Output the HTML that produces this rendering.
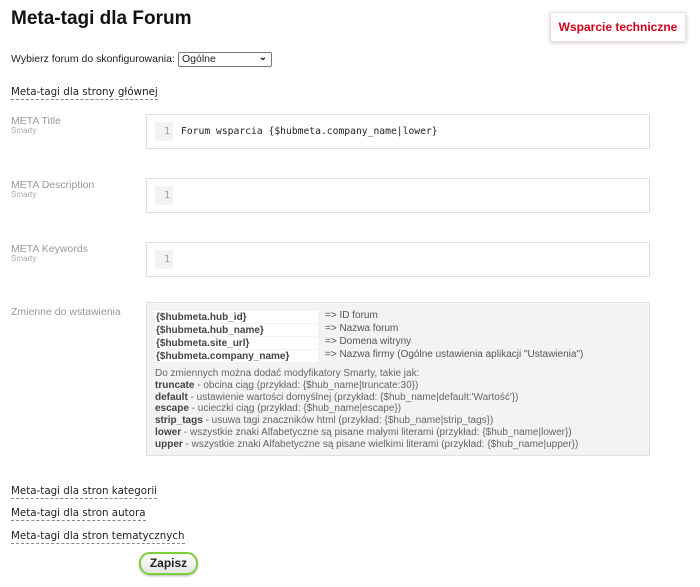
<!DOCTYPE html>
<html><head><meta charset="utf-8"><style>
*{margin:0;padding:0;box-sizing:border-box}
body{width:700px;height:587px;background:#fff;font-family:"Liberation Sans",Arial,sans-serif;position:relative;overflow:hidden;color:#222}
.a{position:absolute;white-space:nowrap}
h1{position:absolute;left:11px;top:8px;font-size:19px;font-weight:bold;color:#111}
.sup{left:550px;top:12px;width:136px;height:30px;border:1px solid #f2dede;box-shadow:0 1px 4px rgba(0,0,0,.2);color:#d0021b;font-weight:bold;font-size:12px;line-height:28px;text-align:center}
.lbl{font-size:10.5px;color:#222}
.sel{left:178px;top:52px;width:94px;height:15px;border:1px solid #777;border-radius:2px;font-size:10.5px;line-height:13px;padding-left:3px;background:#fff}
.h{font-family:"DejaVu Sans",sans-serif;font-size:10.3px;color:#222;border-bottom:1px dashed #888;padding-bottom:1px}
.fl{font-size:10.5px;color:#999;left:11px}
.sm{font-size:8px;color:#aaa;left:11px}
.ed{left:146px;width:504px;border:1px solid #ddd;background:#fff}
.g{position:absolute;left:8px;top:7px;width:18px;height:19px;background:#f2f2f2;color:#999;font-family:"DejaVu Sans Mono",monospace;font-size:9.7px;text-align:right;padding-right:3px;line-height:19px}
.code{position:absolute;left:34px;top:7px;line-height:19px;font-family:"DejaVu Sans Mono",monospace;font-size:9.7px;color:#222}
.box{left:146px;top:302px;width:504px;height:154px;background:#f3f3f3;border:1px solid #e2e2e2}
.v{left:155px;width:163px;height:12px;background:#fff;font-size:10px;font-weight:bold;color:#444;line-height:13px;padding-left:1px}
.d{left:325px;font-size:10px;color:#555}
.t{left:155px;font-size:10px;color:#666;line-height:11.8px}
.t b{color:#444}
.btn{left:139px;top:552px;width:59px;height:23px;border:2px solid #7bcf3c;border-radius:11px;background:linear-gradient(#fff,#e6e6e6);font-weight:bold;font-size:12px;text-align:center;line-height:19px;box-shadow:0 1px 2px rgba(0,0,0,.3)}
</style></head><body>
<h1>Meta-tagi dla Forum</h1>
<div class="a sup">Wsparcie techniczne</div>
<div class="a lbl" style="left:11px;top:53px">Wybierz forum do skonfigurowania:</div>
<div class="a sel">Ogólne<span style="position:absolute;right:4px;top:-2px;font-size:10px;font-weight:bold">&#8964;</span></div>
<div class="a h" style="left:11px;top:86px">Meta-tagi dla strony głównej</div>

<div class="a fl" style="top:115px">META Title</div><div class="a sm" style="top:126px">Smarty</div>
<div class="a ed" style="top:114px;height:35px"><div class="g">1</div><div class="code">Forum wsparcia {$hubmeta.company_name|lower}</div></div>
<div class="a fl" style="top:179px">META Description</div><div class="a sm" style="top:190px">Smarty</div>
<div class="a ed" style="top:178px;height:35px"><div class="g">1</div></div>
<div class="a fl" style="top:243px">META Keywords</div><div class="a sm" style="top:254px">Smarty</div>
<div class="a ed" style="top:242px;height:35px"><div class="g">1</div></div>
<div class="a fl" style="top:306px">Zmienne do wstawienia</div>

<div class="a box"></div>
<div class="a v" style="top:311px">{$hubmeta.hub_id}</div><div class="a d" style="top:310px">=&gt; ID forum</div>
<div class="a v" style="top:324px">{$hubmeta.hub_name}</div><div class="a d" style="top:323px">=&gt; Nazwa forum</div>
<div class="a v" style="top:337px">{$hubmeta.site_url}</div><div class="a d" style="top:336px">=&gt; Domena witryny</div>
<div class="a v" style="top:350px">{$hubmeta.company_name}</div><div class="a d" style="top:349px">=&gt; Nazwa firmy (Ogólne ustawienia aplikacji "Ustawienia")</div>
<div class="a t" style="top:368px">Do zmiennych można dodać modyfikatory Smarty, takie jak:<br>
<b>truncate</b> - obcina ciąg (przykład: {$hub_name|truncate:30})<br>
<b>default</b> - ustawienie wartości domyślnej (przykład: {$hub_name|default:'Wartość'})<br>
<b>escape</b> - ucieczki ciąg (przykład: {$hub_name|escape})<br>
<b>strip_tags</b> - usuwa tagi znaczników html (przykład: {$hub_name|strip_tags})<br>
<b>lower</b> - wszystkie znaki Alfabetyczne są pisane małymi literami (przykład: {$hub_name|lower})<br>
<b>upper</b> - wszystkie znaki Alfabetyczne są pisane wielkimi literami (przykład: {$hub_name|upper})</div>

<div class="a h" style="left:11px;top:485px">Meta-tagi dla stron kategorii</div>
<div class="a h" style="left:11px;top:507px">Meta-tagi dla stron autora</div>
<div class="a h" style="left:11px;top:530px">Meta-tagi dla stron tematycznych</div>
<div class="a btn">Zapisz</div>
</body></html>
